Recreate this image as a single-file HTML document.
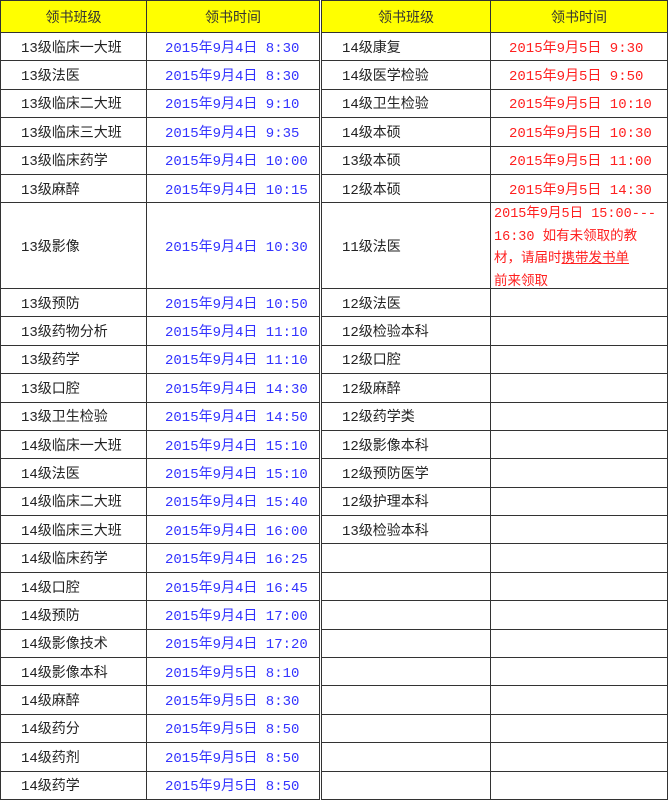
<!DOCTYPE html>
<html><head><meta charset="utf-8"><style>
body{margin:0;background:#fff;width:668px;height:800px;overflow:hidden;font-family:"Liberation Mono","Noto Sans CJK SC",monospace;font-size:14px;color:#222}
table{position:absolute;top:0;border-collapse:collapse;table-layout:fixed}
td{border:1px solid #333;height:27.4px;padding:0;white-space:pre;overflow:hidden}
tr.h td{background:#ffff00;height:31px;text-align:center;color:#333}
tr.b td{height:84.6px}
.c{padding-left:20px}
.t{color:#3333ff;padding-left:18px}
.r{color:#ff2020;padding-left:18px}
.n{color:#ff2020;vertical-align:top;font-size:13.5px;position:relative;overflow:visible}
.n div{position:absolute;left:3px;top:1px;line-height:22.5px;white-space:pre;height:84px}
#L{left:0;width:319px}
#R{left:321px;width:346px}
</style></head><body>
<table id="L"><colgroup><col style="width:146px"><col style="width:173px"></colgroup>
<tr class="h"><td>领书班级</td><td>领书时间</td></tr>
<tr><td class="c">13级临床一大班</td><td class="t">2015年9月4日 8:30</td></tr>
<tr><td class="c">13级法医</td><td class="t">2015年9月4日 8:30</td></tr>
<tr><td class="c">13级临床二大班</td><td class="t">2015年9月4日 9:10</td></tr>
<tr><td class="c">13级临床三大班</td><td class="t">2015年9月4日 9:35</td></tr>
<tr><td class="c">13级临床药学</td><td class="t">2015年9月4日 10:00</td></tr>
<tr><td class="c">13级麻醉</td><td class="t">2015年9月4日 10:15</td></tr>
<tr class="b"><td class="c">13级影像</td><td class="t">2015年9月4日 10:30</td></tr>
<tr><td class="c">13级预防</td><td class="t">2015年9月4日 10:50</td></tr>
<tr><td class="c">13级药物分析</td><td class="t">2015年9月4日 11:10</td></tr>
<tr><td class="c">13级药学</td><td class="t">2015年9月4日 11:10</td></tr>
<tr><td class="c">13级口腔</td><td class="t">2015年9月4日 14:30</td></tr>
<tr><td class="c">13级卫生检验</td><td class="t">2015年9月4日 14:50</td></tr>
<tr><td class="c">14级临床一大班</td><td class="t">2015年9月4日 15:10</td></tr>
<tr><td class="c">14级法医</td><td class="t">2015年9月4日 15:10</td></tr>
<tr><td class="c">14级临床二大班</td><td class="t">2015年9月4日 15:40</td></tr>
<tr><td class="c">14级临床三大班</td><td class="t">2015年9月4日 16:00</td></tr>
<tr><td class="c">14级临床药学</td><td class="t">2015年9月4日 16:25</td></tr>
<tr><td class="c">14级口腔</td><td class="t">2015年9月4日 16:45</td></tr>
<tr><td class="c">14级预防</td><td class="t">2015年9月4日 17:00</td></tr>
<tr><td class="c">14级影像技术</td><td class="t">2015年9月4日 17:20</td></tr>
<tr><td class="c">14级影像本科</td><td class="t">2015年9月5日 8:10</td></tr>
<tr><td class="c">14级麻醉</td><td class="t">2015年9月5日 8:30</td></tr>
<tr><td class="c">14级药分</td><td class="t">2015年9月5日 8:50</td></tr>
<tr><td class="c">14级药剂</td><td class="t">2015年9月5日 8:50</td></tr>
<tr><td class="c">14级药学</td><td class="t">2015年9月5日 8:50</td></tr>
</table>
<table id="R"><colgroup><col style="width:169px"><col style="width:177px"></colgroup>
<tr class="h"><td>领书班级</td><td>领书时间</td></tr>
<tr><td class="c">14级康复</td><td class="r">2015年9月5日 9:30</td></tr>
<tr><td class="c">14级医学检验</td><td class="r">2015年9月5日 9:50</td></tr>
<tr><td class="c">14级卫生检验</td><td class="r">2015年9月5日 10:10</td></tr>
<tr><td class="c">14级本硕</td><td class="r">2015年9月5日 10:30</td></tr>
<tr><td class="c">13级本硕</td><td class="r">2015年9月5日 11:00</td></tr>
<tr><td class="c">12级本硕</td><td class="r">2015年9月5日 14:30</td></tr>
<tr class="b"><td class="c">11级法医</td><td class="n"><div>2015年9月5日 15:00---
16:30 如有未领取的教
材，请届时<u>携带发书单</u>
前来领取</div></td></tr>
<tr><td class="c">12级法医</td><td></td></tr>
<tr><td class="c">12级检验本科</td><td></td></tr>
<tr><td class="c">12级口腔</td><td></td></tr>
<tr><td class="c">12级麻醉</td><td></td></tr>
<tr><td class="c">12级药学类</td><td></td></tr>
<tr><td class="c">12级影像本科</td><td></td></tr>
<tr><td class="c">12级预防医学</td><td></td></tr>
<tr><td class="c">12级护理本科</td><td></td></tr>
<tr><td class="c">13级检验本科</td><td></td></tr>
<tr><td></td><td></td></tr><tr><td></td><td></td></tr><tr><td></td><td></td></tr>
<tr><td></td><td></td></tr><tr><td></td><td></td></tr><tr><td></td><td></td></tr>
<tr><td></td><td></td></tr><tr><td></td><td></td></tr><tr><td></td><td></td></tr>
</table>
</body></html>
